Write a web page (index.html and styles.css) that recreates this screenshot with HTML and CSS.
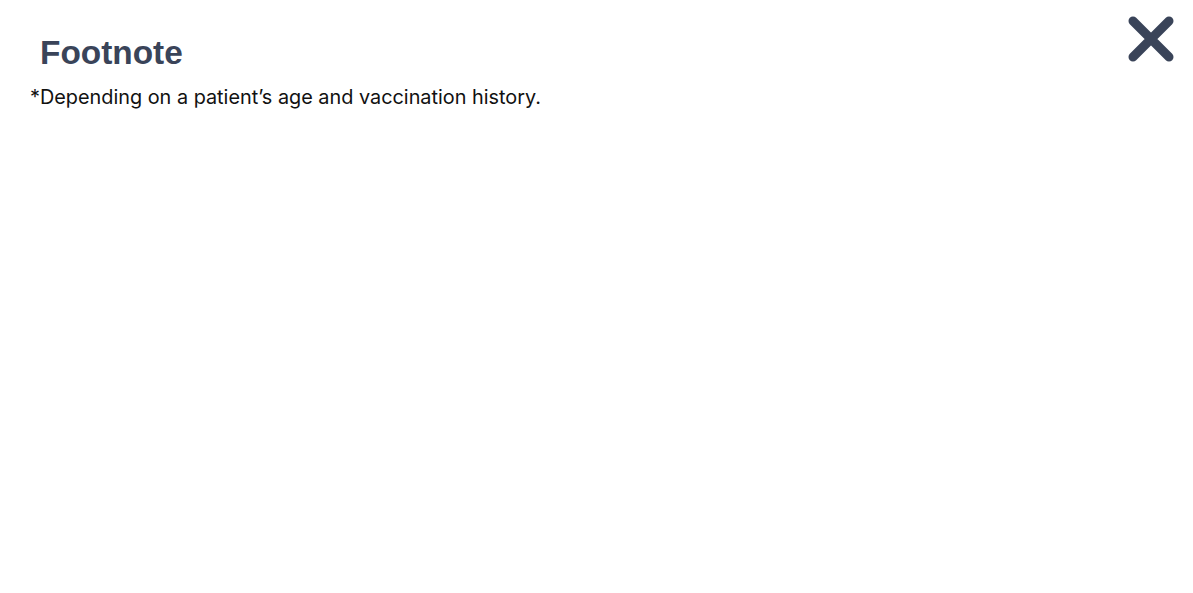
FILE: index.html
```html
<!DOCTYPE html>
<html lang="en">
<head>
<meta charset="utf-8">
<title>Footnote</title>
<link rel="stylesheet" href="styles.css">
</head>
<body>
<div class="modal">
  <header class="modal-header">
    <h2 class="title">Footnote</h2>
    <button class="close" aria-label="Close">
      <svg width="48" height="48" viewBox="0 0 48 48" aria-hidden="true">
        <path d="M6 6 L42 42 M42 6 L6 42" stroke="#3a4459" stroke-width="9" stroke-linecap="round" fill="none"/>
      </svg>
    </button>
  </header>
  <p class="note">*Depending on a patient’s age and vaccination history.</p>
</div>
</body>
</html>
```
FILE: styles.css
```css
html, body {
  margin: 0;
  padding: 0;
  background: #ffffff;
}
body {
  font-family: "Inter", "Liberation Sans", sans-serif;
}
.modal {
  padding: 14px 18px 0 30px;
}
.modal-header {
  display: flex;
  justify-content: space-between;
  align-items: flex-start;
}
.title {
  margin: 20px 0 0 10px;
  font-family: "Liberation Sans", Arial, sans-serif;
  font-weight: 700;
  font-size: 33.4px;
  line-height: 38px;
  color: #3a4459;
}
.close {
  background: none;
  border: 0;
  padding: 0;
  margin: 1px 0 0 0;
  cursor: pointer;
  display: block;
}
.close svg {
  display: block;
}
.note {
  margin: 12px 0 0 0;
  font-size: 19.85px;
  line-height: 26px;
  color: #111111;
}
```
